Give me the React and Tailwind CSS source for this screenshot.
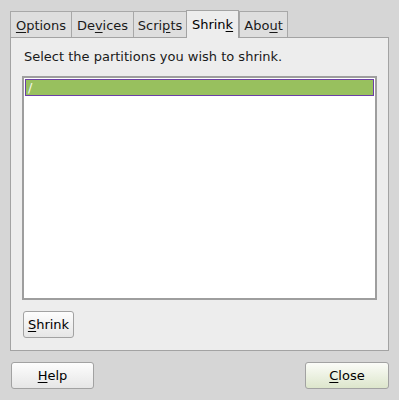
import React from "react";

const font = { fontFamily: '"DejaVu Sans", sans-serif' };

function U({ children }) {
  return <span className="underline underline-offset-2">{children}</span>;
}

function Tab({ children, active, w }) {
  if (active) {
    return (
      <div
        className={`relative z-10 -mb-px flex h-[28px] items-start justify-center border border-b-0 border-[#a3a3a3] bg-[#ededed] pt-[4px] text-[13px] text-black ${w}`}
      >
        {children}
      </div>
    );
  }
  return (
    <div
      className={`-mr-px flex h-[26px] items-start justify-center border border-b-0 border-[#a8a8a8] bg-[#dedede] pt-[4px] text-[13px] text-[#1a1a1a] ${w}`}
    >
      {children}
    </div>
  );
}

function Btn({ children, w, green }) {
  return (
    <div
      className={`flex h-[27px] items-center justify-center rounded-[3px] border border-[#a2a2a2] text-[13px] text-black ${w} ${
        green
          ? "bg-gradient-to-b from-[#fbfcf8] to-[#dde6cc]"
          : "bg-gradient-to-b from-[#fdfdfd] to-[#e6e6e6]"
      }`}
    >
      {children}
    </div>
  );
}

export default function App() {
  return (
    <div className="h-[400px] w-[399px] bg-[#d6d6d6] pl-[10px] pt-[10px]" style={font}>
      <div className="flex items-end">
        <Tab w="w-[62px]">
          <span>
            <U>O</U>ptions
          </span>
        </Tab>
        <Tab w="w-[63px]">
          <span>
            De<U>v</U>ices
          </span>
        </Tab>
        <Tab w="w-[54px]">
          <span>
            Scri<U>p</U>ts
          </span>
        </Tab>
        <Tab active w="w-[53px]">
          <span>
            Shrin<U>k</U>
          </span>
        </Tab>
        <Tab w="w-[49px]">
          <span>
            Abo<U>u</U>t
          </span>
        </Tab>
      </div>
      <div className="flex h-[314px] w-[379px] flex-col border border-[#a3a3a3] bg-[#ededed] pl-[11px] pt-[9px]">
        <div className="h-[20px] pl-[2px] text-[13px] leading-[20px] text-[#1a1a1a]">
          Select the partitions you wish to shrink.
        </div>
        <div className="mt-[9px] h-[224px] w-[355px] border-2 border-[#9e9e9e] bg-white p-[1px]">
          <div className="flex h-[17px] items-center border border-[#6b3fa6] bg-[#98c05e] pl-[2px] text-[13px] leading-none text-[#f4f8ee]">
            /
          </div>
        </div>
        <div className="mt-[11px] pl-[1px]">
          <Btn w="w-[51px]">
            <span>
              <U>S</U>hrink
            </span>
          </Btn>
        </div>
      </div>
      <div className="mt-[11px] flex w-[379px] justify-between pl-[1px]">
        <Btn w="w-[83px]">
          <span>
            <U>H</U>elp
          </span>
        </Btn>
        <Btn w="w-[84px]" green>
          <span>
            <U>C</U>lose
          </span>
        </Btn>
      </div>
    </div>
  );
}
